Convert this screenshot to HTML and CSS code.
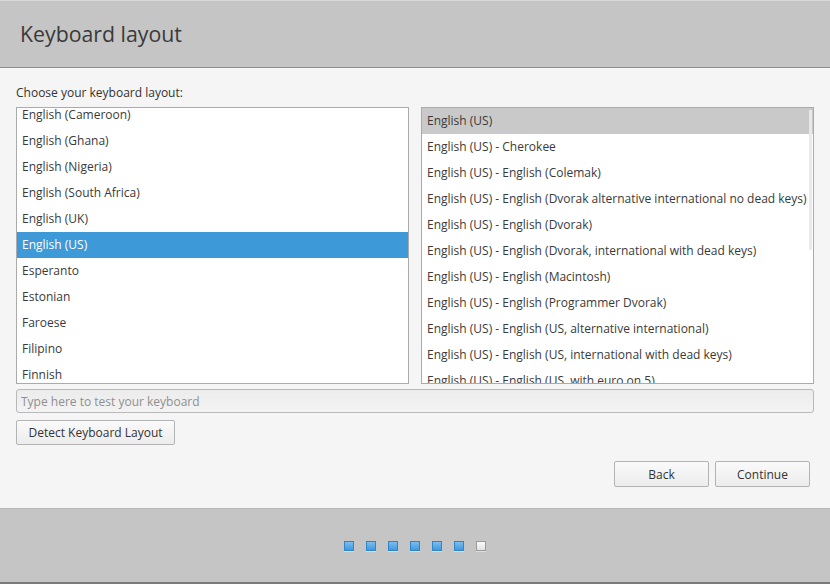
FILE: index.html
```html
<!DOCTYPE html>
<html>
<head>
<meta charset="utf-8">
<link rel="stylesheet" href="styles.css">
</head>
<body>
<div class="window">
  <header class="header"><h1 class="title">Keyboard layout</h1></header>
  <main class="content">
    <div class="prompt">Choose your keyboard layout:</div>
    <div class="lists">
      <div class="list left">
        <div class="items scrolled">
          <div class="item">English (Cameroon)</div>
          <div class="item">English (Ghana)</div>
          <div class="item">English (Nigeria)</div>
          <div class="item">English (South Africa)</div>
          <div class="item">English (UK)</div>
          <div class="item selected">English (US)</div>
          <div class="item">Esperanto</div>
          <div class="item">Estonian</div>
          <div class="item">Faroese</div>
          <div class="item">Filipino</div>
          <div class="item">Finnish</div>
        </div>
      </div>
      <div class="list right">
        <div class="items">
          <div class="item hover">English (US)</div>
          <div class="item">English (US) - Cherokee</div>
          <div class="item">English (US) - English (Colemak)</div>
          <div class="item">English (US) - English (Dvorak alternative international no dead keys)</div>
          <div class="item">English (US) - English (Dvorak)</div>
          <div class="item">English (US) - English (Dvorak, international with dead keys)</div>
          <div class="item">English (US) - English (Macintosh)</div>
          <div class="item">English (US) - English (Programmer Dvorak)</div>
          <div class="item">English (US) - English (US, alternative international)</div>
          <div class="item">English (US) - English (US, international with dead keys)</div>
          <div class="item">English (US) - English (US, with euro on 5)</div>
        </div>
        <div class="scrollbar"></div>
      </div>
    </div>
    <input class="test" type="text" placeholder="Type here to test your keyboard">
    <div class="detect-row"><button class="btn detect">Detect Keyboard Layout</button></div>
    <div class="nav">
      <button class="btn nav-btn">Back</button>
      <button class="btn nav-btn">Continue</button>
    </div>
  </main>
  <footer class="footer">
    <div class="dots">
      <span class="dot done"></span>
      <span class="dot done"></span>
      <span class="dot done"></span>
      <span class="dot done"></span>
      <span class="dot done"></span>
      <span class="dot done"></span>
      <span class="dot"></span>
    </div>
  </footer>
</div>
</body>
</html>
```
FILE: styles.css
```css
* { box-sizing: border-box; }
html, body {
  margin: 0;
  padding: 0;
  width: 830px;
  height: 584px;
  overflow: hidden;
  font-family: "Open Sans", "DejaVu Sans", sans-serif;
  color: #3c3c3c;
}
.window {
  width: 830px;
  height: 584px;
  display: flex;
  flex-direction: column;
  background: #f5f5f5;
}
.header {
  height: 68px;
  background: #c5c5c5;
  border-top: 1px solid #d8d8d8;
  border-bottom: 1px solid #8c8c8c;
  display: flex;
  align-items: center;
  padding-left: 20px;
}
.title {
  margin: 0;
  font-weight: normal;
  font-size: 21.3px;
  color: #3a3a3a;
  line-height: 30px;
  margin-top: -1px;
}
.content {
  height: 440px;
  padding: 16px 16px 0 16px;
  display: flex;
  flex-direction: column;
}
.prompt {
  font-size: 12px;
  line-height: 17px;
  height: 17px;
  margin-bottom: 6px;
  color: #333;
}
.lists {
  display: flex;
  gap: 12px;
  height: 277px;
}
.list {
  position: relative;
  width: 394px;
  height: 277px;
  border: 1px solid #ababab;
  background: #fff;
  overflow: hidden;
}
.items.scrolled { margin-top: -6px; }
.item {
  height: 26px;
  line-height: 26px;
  padding-left: 5px;
  font-size: 12px;
  white-space: nowrap;
  color: #3a3a3a;
}
.item.selected {
  background: #3d99d7;
  color: #fff;
}
.item.hover {
  background: #c9c9c9;
}
.scrollbar {
  position: absolute;
  right: 1px;
  top: 2px;
  width: 3px;
  height: 140px;
  background: #e9e9e9;
  border-radius: 1px;
}
.test {
  margin-top: 5px;
  width: 798px;
  height: 24px;
  border: 1px solid #b9b9b9;
  border-radius: 3px;
  background: linear-gradient(#ececec, #f3f3f3);
  padding: 0 4px;
  font-family: "Open Sans", "DejaVu Sans", sans-serif;
  font-size: 12px;
  color: #333;
  outline: none;
}
.test::placeholder { color: #8f8f8f; }
.detect-row {
  margin-top: 7px;
}
.btn {
  font-family: "Open Sans", "DejaVu Sans", sans-serif;
  font-size: 12px;
  color: #333;
  background: linear-gradient(#fafafa, #ececec);
  border: 1px solid #b3b3b3;
  border-radius: 2px;
  padding: 0;
  cursor: default;
}
.detect {
  width: 159px;
  height: 25px;
}
.nav {
  margin-top: 16px;
  display: flex;
  justify-content: flex-end;
  gap: 6px;
  padding-right: 4px;
}
.nav-btn {
  width: 95px;
  height: 26px;
}
.footer {
  height: 76px;
  background: #c5c5c5;
  border-top: 1px solid #b8b8b8;
  border-bottom: 2px solid #7a7a7a;
  display: flex;
  justify-content: center;
  align-items: center;
}
.dots {
  display: flex;
  gap: 12px;
}
.dot {
  width: 10px;
  height: 10px;
  border: 1px solid #9a9a9a;
  background: linear-gradient(#fafafa, #e2e2e2);
  box-shadow: 0 1px 0 #dcdcdc;
}
.dot.done {
  border-color: #2f86c6;
  background: linear-gradient(#7cbcef, #3f9ae0);
}
```
